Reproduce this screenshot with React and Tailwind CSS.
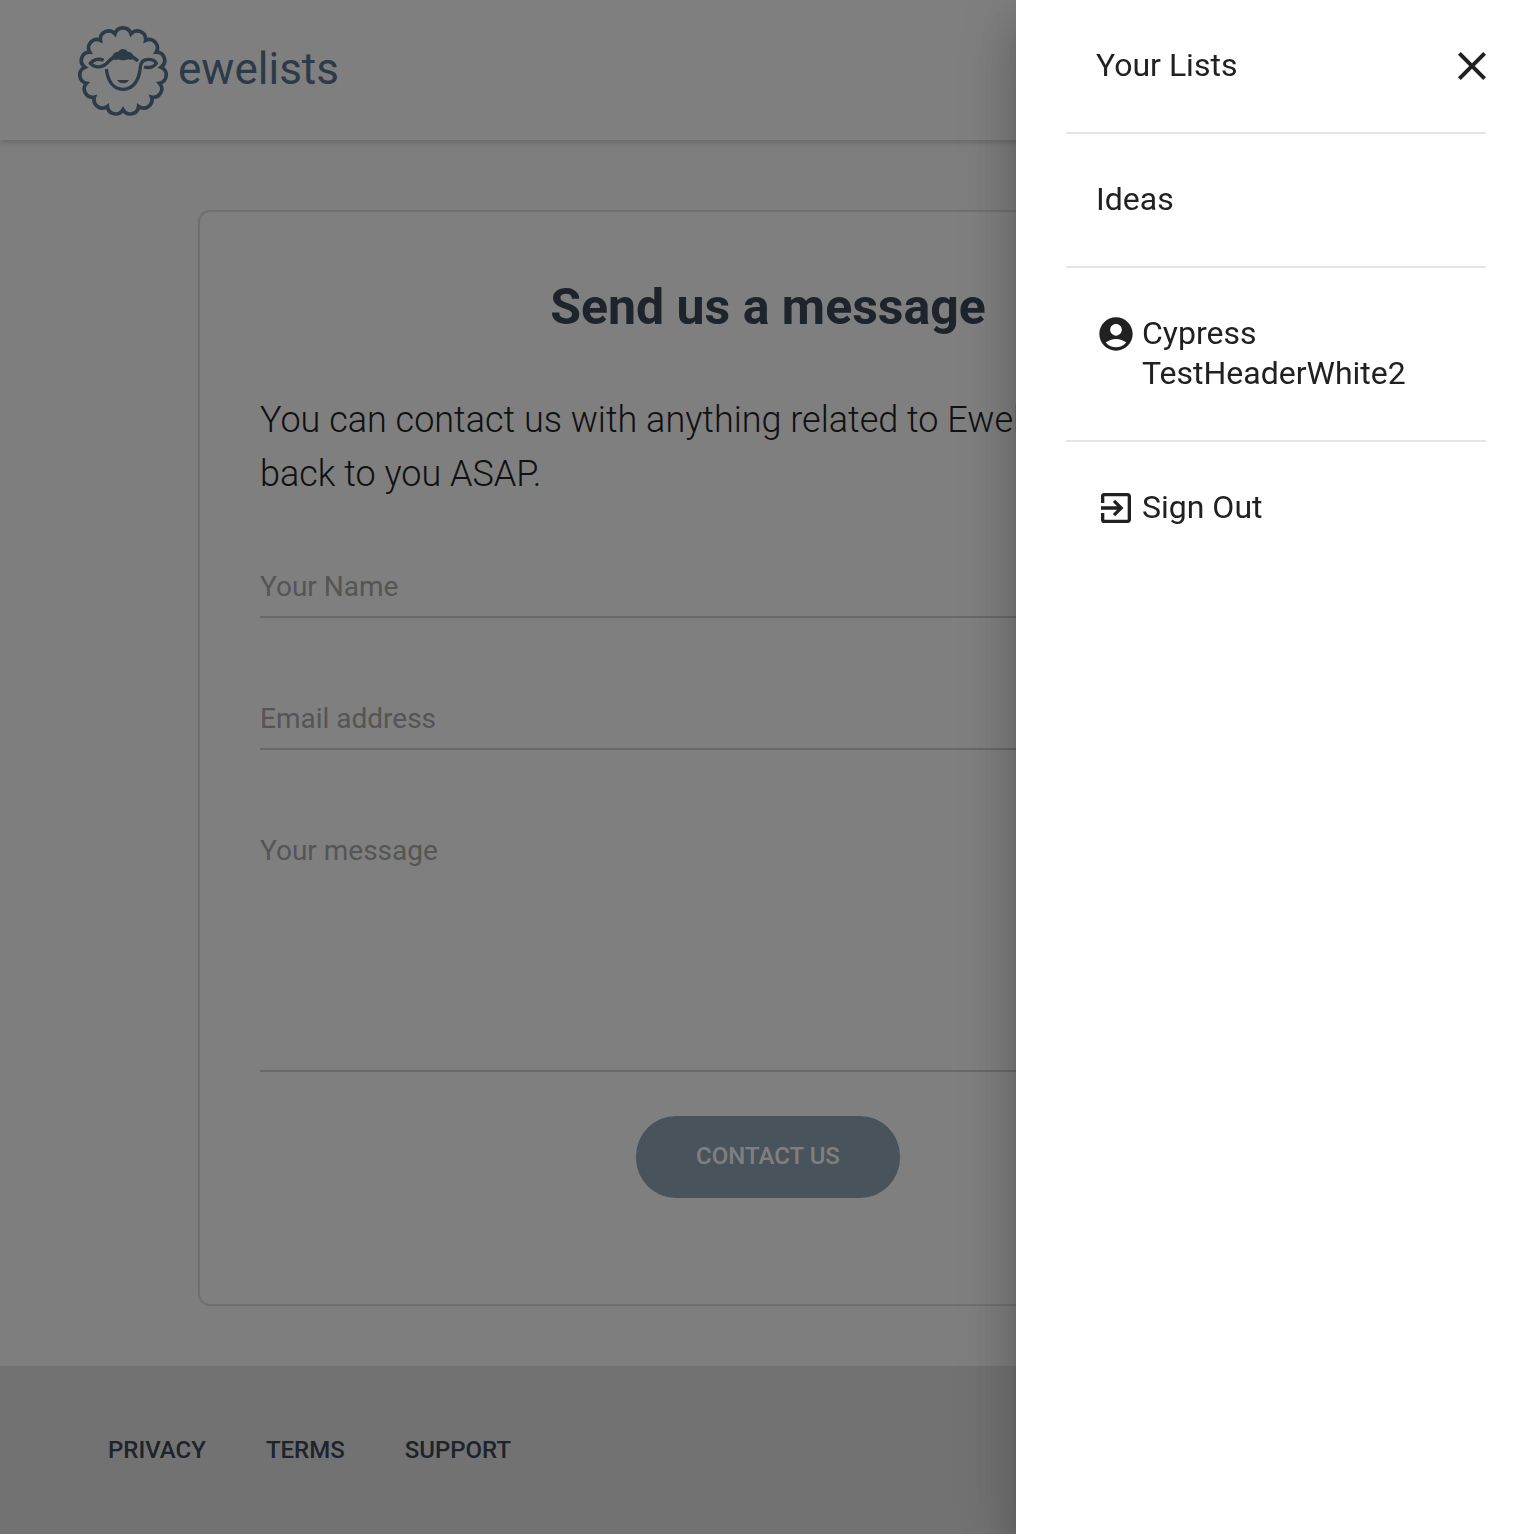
import { MdAccountCircle, MdClose, MdExitToApp } from "react-icons/md";

// Wool outline: 15 equal scallops around the centre of the head.
const SCALLOPS = 15;
const cusps = Array.from({ length: SCALLOPS }, (_, i) => {
  const a = ((i + 0.5) * 2 * Math.PI) / SCALLOPS - Math.PI / 2;
  return [159 + 115 * Math.cos(a), 154 + 115 * Math.sin(a)];
});
const wool =
  `M${cusps[SCALLOPS - 1].join(" ")}` +
  cusps.map(([x, y]) => `A25 25 0 0 1 ${x} ${y}`).join("") +
  "Z";

function SheepLogo() {
  return (
    <svg viewBox="21 12 276 276" className="size-[92px]" fill="none" stroke="currentColor" aria-hidden="true">
      <path d={wool} strokeWidth="11" strokeLinejoin="miter" />
      <g strokeWidth="10">
        <path d="M109 147C113 180 128 208 159 208C192 208 208 178 211 141C212 125 222 118 236 118C248 118 256 123 259 130C252 140 238 145 222 141" />
        <path d="M101 121C85 114 69 119 61 130C69 141 92 146 108 132C120 121 127 110 142 108" />
        <path d="M176 108C190 110 196 115 204 123" />
      </g>
      <path
        stroke="none"
        fill="currentColor"
        d="M124 114C127 106 132 95 145 95C150 84 168 84 173 95C185 95 191 106 194 114C189 119 179 121 174 118C166 122 152 122 145 118C140 121 130 120 124 114Z"
      />
      <path stroke="none" fill="currentColor" d="M142 180H177C171 193 148 193 142 180Z" />
    </svg>
  );
}

const labelClass = "pointer-events-none absolute left-0 text-[28px] leading-[42px] text-[#aaaaaa]";
const controlClass = "block w-full resize-none border-b-2 border-[#d2d2d2] bg-transparent text-[28px] text-[#495057] outline-none";

function Field({ id, label, type }) {
  return (
    <div className="relative">
      <label htmlFor={id} className={`${labelClass} top-[26px]`}>{label}</label>
      <input id={id} type={type} className={`${controlClass} h-[78px] pt-4`} />
    </div>
  );
}

const footerLinks = ["Privacy", "Terms", "Support"];

function Page() {
  return (
    <div className="flex min-h-screen flex-col bg-[#fcfcfc]">
      <header className="flex h-[140px] items-center bg-white px-[77px] shadow-[0_2px_6px_rgba(0,0,0,0.2)]">
        <a href="#home" className="flex items-center gap-[9px] text-[#5a7690]">
          <SheepLogo />
          <span className="pb-0.5 text-[44px] leading-[60px]">ewelists</span>
        </a>
      </header>

      <main className="flex-1 px-[198px] pt-[70px] pb-[60px]">
        <section className="rounded-xl border-2 border-[#dfdfdf] bg-white px-[60px] pt-[60px] pb-[106px]">
          <h1 className="text-center text-[50px] leading-[70px] font-bold text-[#3c4858]">Send us a message</h1>
          <p className="mt-[51px] text-[36px] leading-[54px] font-light text-[#222222]">
            You can contact us with anything related to Ewelists. We&apos;ll get back to you ASAP.
          </p>
          <form className="mt-[39px] flex flex-col gap-[54px]">
            <Field id="name" label="Your Name" type="text" />
            <Field id="email" label="Email address" type="email" />
            <div className="relative">
              <label htmlFor="message" className={`${labelClass} top-[26px]`}>Your message</label>
              <textarea id="message" className={`${controlClass} h-[268px] pt-6`} />
            </div>
            <button
              type="button"
              className="-mt-2.5 self-center rounded-[40px] bg-[#92a7b8] px-[60px] pt-[22px] pb-6 text-[24px] leading-[36px] font-medium text-white uppercase"
            >
              Contact us
            </button>
          </form>
        </section>
      </main>

      <footer className="flex h-[168px] items-center bg-[#e5e5e5] px-[108px]">
        <nav className="flex gap-[60px]">
          {footerLinks.map((name) => (
            <a key={name} href={`#${name.toLowerCase()}`} className="text-[24px] leading-[36px] font-medium text-[#3c4858] uppercase">
              {name}
            </a>
          ))}
        </nav>
      </footer>
    </div>
  );
}

function MenuItem({ icon: Icon, children }) {
  return (
    <li className="border-b-2 border-[#e5e5e5] last:border-b-0">
      <a href="#menu" className="flex items-start gap-[6px] px-[30px] pt-[45px] pb-[47px]">
        {Icon && <Icon className="h-[42px] w-10 shrink-0" />}
        <span className="min-w-0 flex-1">{children}</span>
      </a>
    </li>
  );
}

function Drawer() {
  return (
    <aside className="fixed inset-y-0 right-0 w-[520px] bg-white px-[50px] text-[32px] leading-[40px] text-[#212121] shadow-[0_16px_20px_-10px_rgba(0,0,0,0.2),0_32px_48px_4px_rgba(0,0,0,0.14),0_12px_60px_10px_rgba(0,0,0,0.12)]">
      <ul>
        <MenuItem>Your Lists</MenuItem>
        <MenuItem>Ideas</MenuItem>
        <MenuItem icon={MdAccountCircle}>Cypress TestHeaderWhite2</MenuItem>
        <MenuItem icon={MdExitToApp}>Sign Out</MenuItem>
      </ul>
      <button type="button" aria-label="Close menu" className="absolute top-[42px] right-10">
        <MdClose className="size-12" />
      </button>
    </aside>
  );
}

export default function App() {
  return (
    <div className="font-[Roboto,sans-serif]">
      <Page />
      <div className="fixed inset-0 bg-black/50" />
      <Drawer />
    </div>
  );
}
